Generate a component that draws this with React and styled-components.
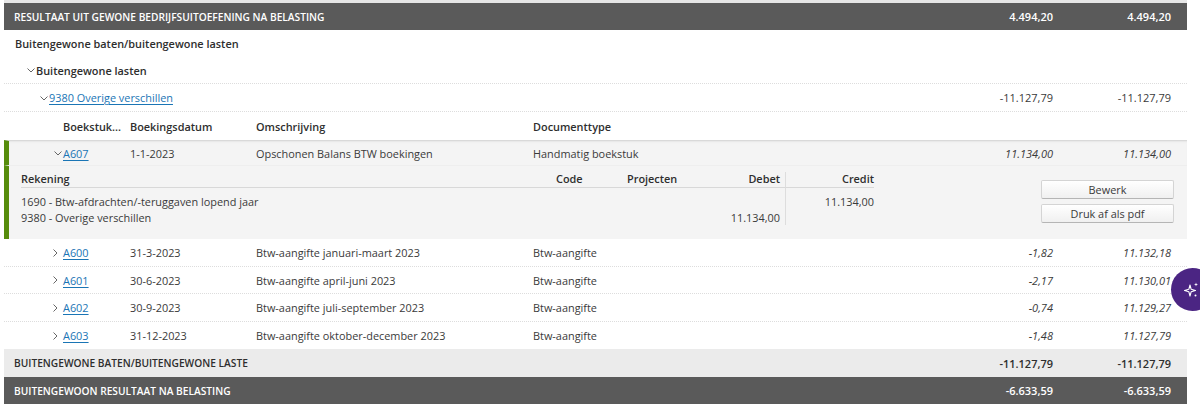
import React from 'react';
import styled, { createGlobalStyle } from 'styled-components';

const GlobalStyle = createGlobalStyle`
  html, body {
    margin: 0;
    background: #fff;
    height: 408px;
    overflow: hidden;
  }
  body {
    font-family: "Open Sans", "Liberation Sans", sans-serif;
    font-size: 10.9px;
    color: #3a3a3a;
    position: relative;
  }
`;

const Table = styled.div`
  width: 1183px;
  margin-left: 4px;
  border-top: 3px solid #e6e6e6;
`;

const TotalRow = styled.div`
  display: grid;
  grid-template-columns: 1fr 118px 118px;
  align-items: center;
  height: ${({ $h }) => $h || 27}px;
  padding: 0 16px 0 10px;
  font-size: 10.2px;
  font-weight: 580;
  background: ${({ $light }) => ($light ? '#ebebeb' : '#5a5a5a')};
  color: ${({ $light }) => ($light ? '#2e2e2e' : '#fff')};
`;

const Amount = styled.div`
  text-align: right;
  font-size: 11px;
  font-style: ${({ $italic }) => ($italic ? 'italic' : 'normal')};
  font-weight: ${({ $bold }) => ($bold ? 580 : 400)};
`;

const GroupRow = styled.div`
  display: flex;
  align-items: center;
  height: 27px;
  padding-left: ${({ $indent }) => $indent}px;
  font-weight: 580;
  color: #2e2e2e;
  border-bottom: ${({ $line }) => ($line ? '1px dotted #ddd' : 'none')};
  box-sizing: border-box;
`;

const AccountRow = styled.div`
  display: grid;
  grid-template-columns: 1fr 118px 118px;
  align-items: center;
  height: 28px;
  box-sizing: border-box;
  padding: 0 16px 0 35px;
  border-bottom: 1px dotted #ddd;
`;

const AccountName = styled.div`
  display: flex;
  align-items: center;
`;

const LedgerLink = styled.a`
  color: #1a75b5;
  text-decoration: underline;
  text-underline-offset: 2px;
  text-decoration-thickness: 1px;
`;

const Chevron = styled.svg`
  width: 10px;
  height: 10px;
  flex: none;
  fill: none;
  stroke: #666;
  stroke-width: 1;
`;

const BookingGrid = styled.div`
  display: grid;
  grid-template-columns: 59px 67px 126px 277px 1fr 118px 118px;
  align-items: center;
  height: ${({ $h }) => $h || 28}px;
  box-sizing: border-box;
  padding-right: 16px;
`;

const HeadRow = styled(BookingGrid)`
  font-weight: 580;
  color: #2e2e2e;
`;

const BookingRow = styled(BookingGrid)`
  background: ${({ $open }) => ($open ? '#f4f4f4' : '#fff')};
  border-bottom: ${({ $last, $open }) =>
    $open ? '1px solid #eee' : $last ? 'none' : '1px dotted #ddd'};
  border-top: ${({ $open }) => ($open ? '1px solid #d9d9d9' : 'none')};
  border-left: ${({ $open }) => ($open ? '5px solid #568c0c' : 'none')};
  box-shadow: ${({ $open }) => ($open ? 'inset 0 2px 2px -1px #e6e6e6' : 'none')};
  grid-template-columns: ${({ $open }) =>
    $open
      ? '54px 67px 126px 277px 1fr 118px 118px'
      : '59px 67px 126px 277px 1fr 118px 118px'};
`;

const Toggle = styled.div`
  display: flex;
  justify-content: flex-end;
  padding-right: ${({ $closed }) => ($closed ? 3 : 0)}px;
`;

const Detail = styled.div`
  display: flex;
  justify-content: space-between;
  height: 73px;
  box-sizing: border-box;
  padding: 6px 13px 0 12px;
  background: #f4f4f4;
  border-left: 5px solid #568c0c;
`;

const LinesTable = styled.div`
  display: grid;
  grid-template-columns: 535px 71px 69px 90px 88px;
  grid-auto-rows: min-content;
  width: 853px;
`;

const LinesHead = styled.div`
  height: 15px;
  line-height: 14px;
  font-weight: 580;
  color: #2e2e2e;
  text-align: ${({ $right }) => ($right ? 'right' : 'left')};
  padding-right: ${({ $sep }) => ($sep ? 5 : 0)}px;
  border-bottom: 1px solid #d8d8d8;
  border-right: ${({ $sep }) => ($sep ? '1px solid #ddd' : 'none')};
`;

const LinesCell = styled.div`
  grid-column: ${({ $col }) => $col};
  grid-row: 2;
  padding-top: 6px;
  line-height: 16px;
  height: 37px;
  box-sizing: border-box;
  white-space: nowrap;
  text-align: ${({ $right }) => ($right ? 'right' : 'left')};
  padding-right: ${({ $sep }) => ($sep ? 5 : 0)}px;
  border-right: ${({ $sep }) => ($sep ? '1px solid #ddd' : 'none')};
`;

const Actions = styled.div`
  display: flex;
  flex-direction: column;
  gap: 5px;
  width: 133px;
  padding-top: 8px;
`;

const ActionButton = styled.button`
  height: 19px;
  padding: 0;
  font: inherit;
  color: #3a3a3a;
  background: linear-gradient(#fff, #f0f0f0);
  border: 1px solid #d4d4d4;
  border-bottom-color: #b5b5b5;
  border-radius: 2px;
`;

const AssistantButton = styled.div`
  position: absolute;
  left: 1171px;
  top: 268px;
  width: 43px;
  height: 43px;
  border-radius: 50%;
  background: #4b2583;
  display: flex;
  align-items: center;
  padding-left: 13px;
  box-sizing: border-box;
`;

const ChevronDown = () => (
  <Chevron viewBox="0 0 10 10">
    <path d="M1.5 3.5 5 7l3.5-3.5" />
  </Chevron>
);

const ChevronRight = () => (
  <Chevron viewBox="0 0 10 10">
    <path d="M3.5 1.5 7 5 3.5 8.5" />
  </Chevron>
);

const bookings = [
  { id: 'A600', date: '31-3-2023', text: 'Btw-aangifte januari-maart 2023', amount: '-1,82', total: '11.132,18' },
  { id: 'A601', date: '30-6-2023', text: 'Btw-aangifte april-juni 2023', amount: '-2,17', total: '11.130,01' },
  { id: 'A602', date: '30-9-2023', text: 'Btw-aangifte juli-september 2023', amount: '-0,74', total: '11.129,27' },
  { id: 'A603', date: '31-12-2023', text: 'Btw-aangifte oktober-december 2023', amount: '-1,48', total: '11.127,79' },
];

const App = () => {
  return (
    <>
      <GlobalStyle />
      <Table>
        <TotalRow>
          <div>RESULTAAT UIT GEWONE BEDRIJFSUITOEFENING NA BELASTING</div>
          <Amount $bold>4.494,20</Amount>
          <Amount $bold>4.494,20</Amount>
        </TotalRow>
        <GroupRow $indent={11}>Buitengewone baten/buitengewone lasten</GroupRow>
        <GroupRow $indent={22} $line>
          <ChevronDown />
          Buitengewone lasten
        </GroupRow>
        <AccountRow>
          <AccountName>
            <ChevronDown />
            <LedgerLink>9380 Overige verschillen</LedgerLink>
          </AccountName>
          <Amount>-11.127,79</Amount>
          <Amount>-11.127,79</Amount>
        </AccountRow>
        <HeadRow>
          <div />
          <div>Boekstuk...</div>
          <div>Boekingsdatum</div>
          <div>Omschrijving</div>
          <div>Documenttype</div>
        </HeadRow>
        <BookingRow $open $h={26}>
          <Toggle><ChevronDown /></Toggle>
          <LedgerLink>A607</LedgerLink>
          <div>1-1-2023</div>
          <div>Opschonen Balans BTW boekingen</div>
          <div>Handmatig boekstuk</div>
          <Amount $italic>11.134,00</Amount>
          <Amount $italic>11.134,00</Amount>
        </BookingRow>
        <Detail>
          <LinesTable>
            <LinesHead>Rekening</LinesHead>
            <LinesHead>Code</LinesHead>
            <LinesHead>Projecten</LinesHead>
            <LinesHead $right $sep>Debet</LinesHead>
            <LinesHead $right>Credit</LinesHead>
            <LinesCell $col={1}>
              1690 - Btw-afdrachten/-teruggaven lopend jaar
              <br />
              9380 - Overige verschillen
            </LinesCell>
            <LinesCell $col={4} $right $sep>
              <br />
              11.134,00
            </LinesCell>
            <LinesCell $col={5} $right>11.134,00</LinesCell>
          </LinesTable>
          <Actions>
            <ActionButton>Bewerk</ActionButton>
            <ActionButton>Druk af als pdf</ActionButton>
          </Actions>
        </Detail>
        {bookings.map((item, i) => (
          <BookingRow key={item.id} $last={i === bookings.length - 1} $h={i === 0 || i === 2 ? 28 : 27}>
            <Toggle $closed><ChevronRight /></Toggle>
            <LedgerLink>{item.id}</LedgerLink>
            <div>{item.date}</div>
            <div>{item.text}</div>
            <div>Btw-aangifte</div>
            <Amount $italic>{item.amount}</Amount>
            <Amount $italic>{item.total}</Amount>
          </BookingRow>
        ))}
        <TotalRow $light $h={28}>
          <div>BUITENGEWONE BATEN/BUITENGEWONE LASTE</div>
          <Amount $bold>-11.127,79</Amount>
          <Amount $bold>-11.127,79</Amount>
        </TotalRow>
        <TotalRow>
          <div>BUITENGEWOON RESULTAAT NA BELASTING</div>
          <Amount $bold>-6.633,59</Amount>
          <Amount $bold>-6.633,59</Amount>
        </TotalRow>
      </Table>
      <AssistantButton>
        <svg width="17" height="17" viewBox="0 0 17 17" fill="#fff">
          <path d="M6 4 7.2 8.3 11.5 9.5 7.2 10.7 6 15 4.8 10.7 .5 9.5 4.8 8.3Z" fill="none" stroke="#fff" strokeWidth="1.1" strokeLinejoin="round" />
          <path d="M12 1.5 12.5 3 14 3.5 12.5 4 12 5.5 11.5 4 10 3.5 11.5 3Z" />
          <circle cx="11.5" cy="14.5" r="1" />
        </svg>
      </AssistantButton>
    </>
  );
};

export default App;
